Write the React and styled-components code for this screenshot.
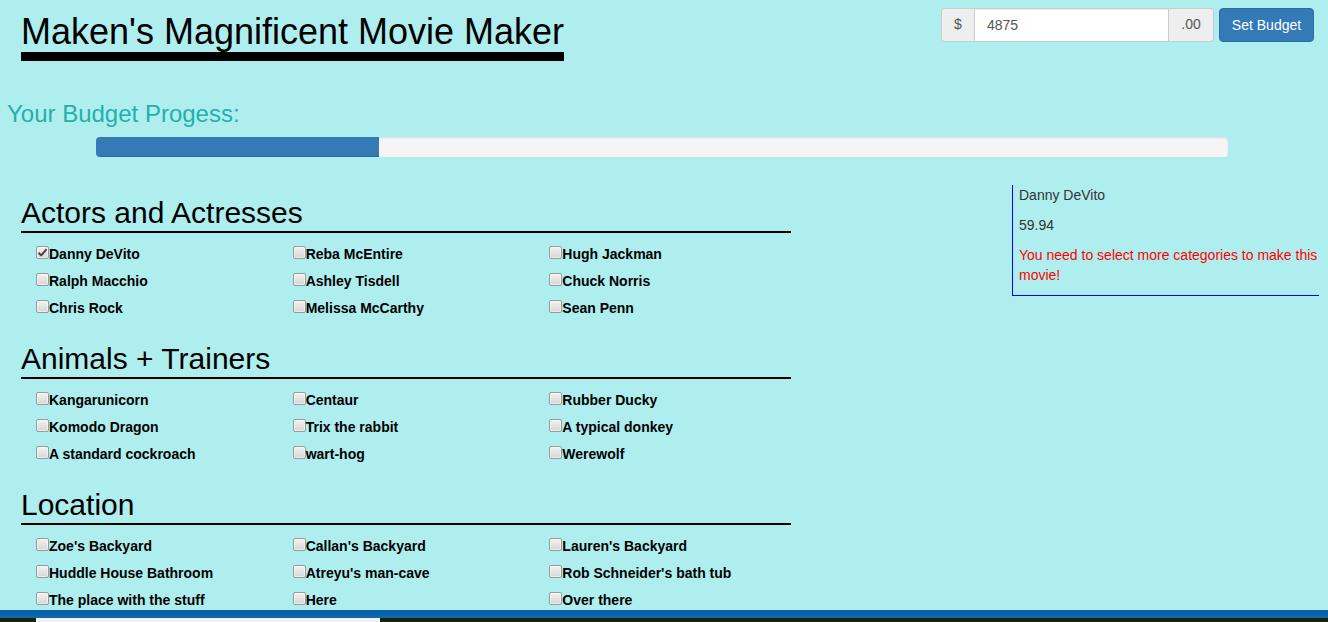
import React, { useState } from "react";
import styled, { createGlobalStyle } from "styled-components";

const GlobalStyle = createGlobalStyle`
  html, body { margin: 0; padding: 0; }
  body {
    background: #afeeee;
    font-family: "Liberation Sans", Arial, sans-serif;
    font-size: 14px;
    line-height: 1.42857;
    color: #333;
    overflow: hidden;
  }
  * { box-sizing: border-box; }
`;

const Header = styled.header`
  display: flex;
  justify-content: space-between;
  align-items: flex-start;
`;

const Title = styled.h1`
  margin: 12px 0 0 21px;
  font-size: 36px;
  font-weight: 400;
  line-height: 39.6px;
  color: #000;
  border-bottom: 9px solid #000;
`;

const BudgetForm = styled.form`
  display: flex;
  gap: 5px;
  margin: 8px 14px 0 0;
`;

const InputGroup = styled.div`
  display: flex;
  height: 34px;
`;

const Addon = styled.span`
  display: flex;
  align-items: center;
  justify-content: center;
  width: ${(p) => p.$w}px;
  height: 34px;
  font-size: 14px;
  color: #555;
  background: #eee;
  border: 1px solid #ccc;
  ${(p) =>
    p.$side === "left"
      ? "border-right: 0; border-radius: 4px 0 0 4px;"
      : "border-left: 0; border-radius: 0 4px 4px 0;"}
`;

const BudgetInput = styled.input`
  width: 195px;
  height: 34px;
  padding: 6px 12px;
  font-family: inherit;
  font-size: 14px;
  color: #555;
  background: #fff;
  border: 1px solid #ccc;
  box-shadow: inset 0 1px 1px rgba(0, 0, 0, 0.075);
  outline: none;
`;

const Button = styled.button`
  width: 95px;
  height: 34px;
  padding: 0;
  font-family: inherit;
  font-size: 14px;
  white-space: nowrap;
  color: #fff;
  background: #337ab7;
  border: 1px solid #2e6da4;
  border-radius: 4px;
  cursor: pointer;
`;

const ProgressTitle = styled.h3`
  margin: 40px 0 0 7px;
  font-size: 24px;
  font-weight: 400;
  line-height: 26.4px;
  color: #20b2aa;
`;

const Progress = styled.div`
  height: 20px;
  margin: 10px 100px 0 96px;
  background: #f5f5f5;
  border-radius: 4px;
  box-shadow: inset 0 1px 2px rgba(0, 0, 0, 0.1);
  overflow: hidden;
`;

const ProgressBar = styled.div`
  height: 100%;
  background: #337ab7;
  box-shadow: inset 0 -1px 0 rgba(0, 0, 0, 0.15);
`;

const Main = styled.main`
  display: flex;
  align-items: flex-start;
  margin-top: 28px;
`;

const LeftCol = styled.div`
  margin-left: 21px;
  width: 770px;
`;

const Section = styled.section`
  margin-top: ${(p) => (p.$first ? 11 : 17)}px;
`;

const SectionTitle = styled.h2`
  margin: 0;
  padding-bottom: 2px;
  font-size: 30px;
  font-weight: 400;
  line-height: 33px;
  color: #000;
  border-bottom: 2px solid #000;
`;

const OptionGrid = styled.div`
  display: grid;
  grid-template-columns: repeat(3, 1fr);
  grid-auto-rows: 27px;
  padding-top: 11px;
`;

const OptionLabel = styled.label`
  display: block;
  padding-left: 15px;
  font-size: 14px;
  font-weight: 700;
  line-height: 20px;
  color: #000;
  white-space: nowrap;
  cursor: pointer;
`;

const Box = styled.span`
  display: inline-block;
  width: 13px;
  height: 13px;
  vertical-align: baseline;
  border: 1px solid #9a9a9a;
  border-radius: 2px;
  background: linear-gradient(#f2f2f2, #d6d6d6);
  box-shadow: inset 0 0 0 1px rgba(255, 255, 255, 0.5);
  svg { display: block; }
`;

const RightPanel = styled.aside`
  margin-left: auto;
  margin-right: 9px;
  width: 307px;
  padding-left: 6px;
  border-left: 1px solid #0000ff;
  border-bottom: 1px solid #0000ff;
  color: #333;
`;

const PanelText = styled.p`
  margin: 0 0 10px;
  line-height: 20px;
  color: ${(p) => (p.$warn ? "#ff0000" : "#333")};
`;

const Taskbar = styled.div`
  position: fixed;
  left: 0;
  right: 0;
  bottom: 0;
  display: flex;
  flex-direction: column;
`;

const TaskbarBlue = styled.div`
  height: 8px;
  background: linear-gradient(#0b5c9c, #0e6ab5);
`;

const TaskbarDark = styled.div`
  height: 4px;
  background: #16240f;
  display: flex;
`;

const TaskbarStrip = styled.div`
  margin-left: 36px;
  width: 344px;
  background: #f2f2f2;
`;

const sections = [
  {
    title: "Actors and Actresses",
    items: [
      "Danny DeVito",
      "Reba McEntire",
      "Hugh Jackman",
      "Ralph Macchio",
      "Ashley Tisdell",
      "Chuck Norris",
      "Chris Rock",
      "Melissa McCarthy",
      "Sean Penn",
    ],
  },
  {
    title: "Animals + Trainers",
    items: [
      "Kangarunicorn",
      "Centaur",
      "Rubber Ducky",
      "Komodo Dragon",
      "Trix the rabbit",
      "A typical donkey",
      "A standard cockroach",
      "wart-hog",
      "Werewolf",
    ],
  },
  {
    title: "Location",
    items: [
      "Zoe's Backyard",
      "Callan's Backyard",
      "Lauren's Backyard",
      "Huddle House Bathroom",
      "Atreyu's man-cave",
      "Rob Schneider's bath tub",
      "The place with the stuff",
      "Here",
      "Over there",
    ],
  },
];

function Check({ checked }) {
  return (
    <Box>
      {checked && (
        <svg width="11" height="11" viewBox="0 0 11 11">
          <path
            d="M1.5 5.8 L4.2 8.4 L9.6 2.2"
            fill="none"
            stroke="#444"
            strokeWidth="2"
            strokeLinejoin="round"
          />
        </svg>
      )}
    </Box>
  );
}

export default function App() {
  const [checked, setChecked] = useState({ "Danny DeVito": true });
  const toggle = (name) => setChecked((c) => ({ ...c, [name]: !c[name] }));

  return (
    <>
      <GlobalStyle />
      <Header>
        <Title>Maken's Magnificent Movie Maker</Title>
        <BudgetForm onSubmit={(e) => e.preventDefault()}>
          <InputGroup>
            <Addon $side="left" $w={33}>$</Addon>
            <BudgetInput defaultValue="4875" />
            <Addon $side="right" $w={45}>.00</Addon>
          </InputGroup>
          <Button type="submit">Set Budget</Button>
        </BudgetForm>
      </Header>
      <ProgressTitle>Your Budget Progess:</ProgressTitle>
      <Progress>
        <ProgressBar style={{ width: "25%" }} />
      </Progress>
      <Main>
        <LeftCol>
          {sections.map((s, i) => (
            <Section key={s.title} $first={i === 0}>
              <SectionTitle>{s.title}</SectionTitle>
              <OptionGrid>
                {s.items.map((item) => (
                  <OptionLabel key={item} onClick={() => toggle(item)}>
                    <Check checked={!!checked[item]} />
                    {item}
                  </OptionLabel>
                ))}
              </OptionGrid>
            </Section>
          ))}
        </LeftCol>
        <RightPanel>
          <PanelText>Danny DeVito</PanelText>
          <PanelText>59.94</PanelText>
          <PanelText $warn>You need to select more categories to make this movie!</PanelText>
        </RightPanel>
      </Main>
      <Taskbar>
        <TaskbarBlue />
        <TaskbarDark>
          <TaskbarStrip />
        </TaskbarDark>
      </Taskbar>
    </>
  );
}
